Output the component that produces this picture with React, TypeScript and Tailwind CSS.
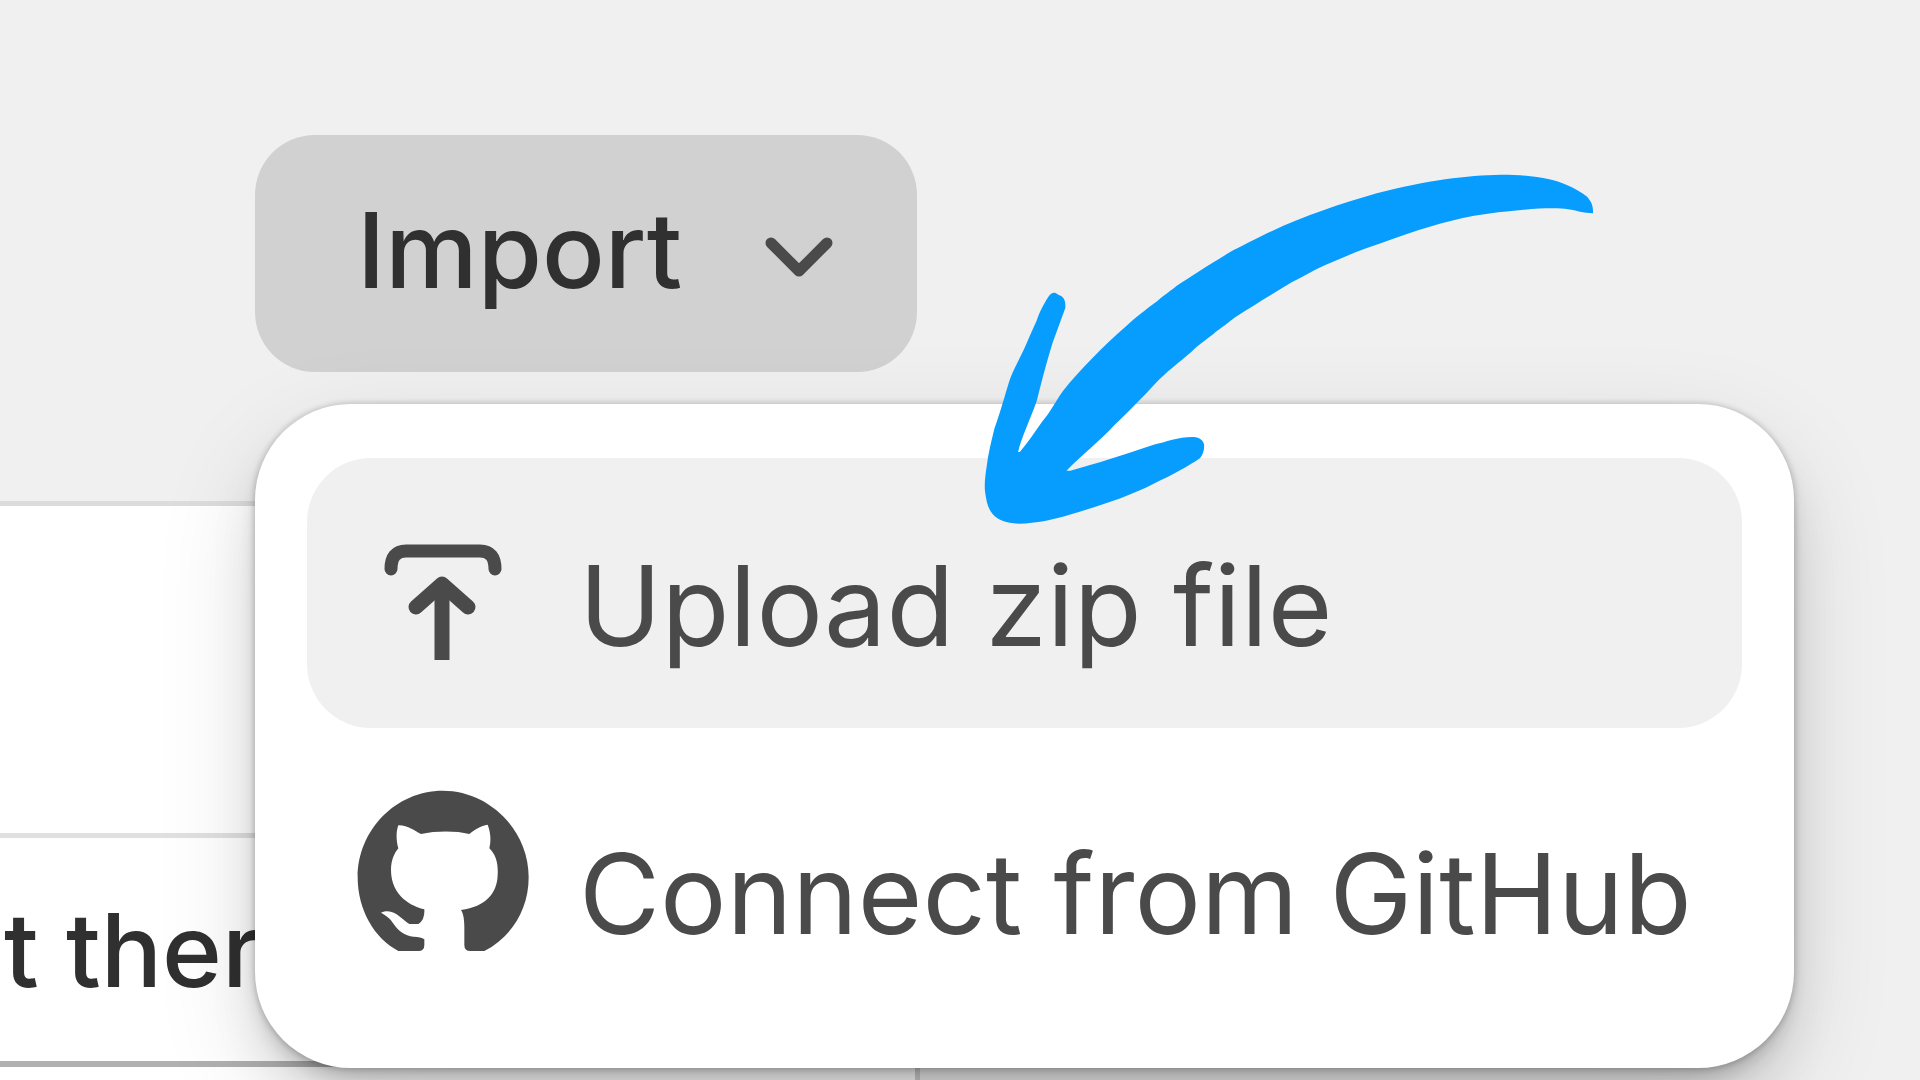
import React from "react";

const font = "font-['Inter',sans-serif]";

function ChevronDown() {
  return (
    <svg aria-hidden="true" viewBox="0 0 72 46" className="mt-2 h-[46px] w-[72px] shrink-0" fill="none" stroke="#4a4a4a" strokeWidth="11" strokeLinecap="round" strokeLinejoin="round">
      <path d="M8 8 L36 36 L64 8" />
    </svg>
  );
}

function UploadIcon() {
  return (
    <svg aria-hidden="true" viewBox="0 0 178 178" className="size-[178px] shrink-0" fill="none" stroke="#4a4a4a" strokeWidth="12" strokeLinecap="round" strokeLinejoin="round">
      <path d="M38 65 Q38 47 53 47 H127 Q142 47 142 65" strokeWidth="13" />
      <path d="M89 156 V82" strokeWidth="15" strokeLinecap="butt" />
      <path d="M63 103 L89 80 L115 103" strokeWidth="15" />
    </svg>
  );
}

function GitHubIcon() {
  return (
    <svg aria-hidden="true" viewBox="36 33 534 534" className="mb-[22px] size-[178px] shrink-0" fill="#4a4a4a">
      <path d="M305 62 C165 62 50 180 50 322 C50 420 100 505 172 543 H232 Q250 543 250 525 V508 Q240 500 218 500 C190 498 172 482 158 462 C148 446 138 438 120 428 C160 412 180 448 205 462 H232 Q252 450 250 418 C215 410 150 380 150 300 C150 270 160 250 172 235 C165 210 165 185 172 166 C200 165 220 182 240 192 C285 182 345 182 385 192 C400 180 420 166 440 164 C450 190 450 215 445 235 C465 255 472 280 470 315 C468 370 435 410 360 420 C367 430 370 450 370 470 V525 Q370 543 388 543 H430 C510 502 563 420 563 322 C563 180 445 62 305 62 Z" />
    </svg>
  );
}

function Arrow() {
  return (
    <svg aria-hidden="true" viewBox="0 0 1568 1200" preserveAspectRatio="none" className="pointer-events-none absolute left-[960px] top-[150px] z-20 h-[400px] w-[660px]" fill="#069dff">
      <path d="M1504 188 C1504 170 1502 158 1490 140 C1460 112 1425 94 1400 88 C1365 78 1330 74 1285 74 C1205 76 1110 90 990 130 C900 163 810 200 720 256 C690 274 675 286 650 300 C590 345 555 375 515 407 C490 432 480 440 465 457 C440 480 420 500 395 528 C335 595 285 660 245 722 C225 758 215 785 195 815 C178 845 160 880 142 906 L138 906 C145 865 165 815 183 750 C188 725 192 705 198 675 C206 640 212 610 220 578 L250 475 C252 452 246 440 236 436 L227 429 C220 427 215 432 210 440 C195 470 188 490 182 512 C170 545 160 575 152 598 C138 635 125 665 118 690 C108 730 95 790 82 835 C74 875 68 910 65 935 C60 975 57 1005 60 1030 C63 1055 66 1075 78 1093 C92 1112 110 1120 140 1121 C180 1120 225 1108 260 1094 C330 1068 400 1040 460 1001 C505 975 540 950 570 925 C580 908 580 895 580 884 C578 872 570 862 555 861 C520 860 490 876 460 884 C400 910 320 942 262 962 L253 962 C285 920 335 870 367 825 C405 780 435 740 463 702 C490 665 520 638 550 605 C570 580 590 565 608 545 C632 523 640 515 652 503 C700 465 745 430 788 397 C815 380 840 360 868 345 C900 328 930 311 965 295 C1010 275 1050 256 1090 240 C1160 212 1225 192 1310 183 C1365 175 1420 172 1445 178 C1465 181 1480 190 1504 190 Z" />
    </svg>
  );
}

const items = [
  { label: "Upload zip file", icon: <UploadIcon />, active: true },
  { label: "Connect from GitHub", icon: <GitHubIcon />, active: false },
];

function ImportMenu() {
  return (
    <div className="relative ml-[255px] inline-block align-top">
      <button type="button" aria-haspopup="menu" aria-expanded="true" className="flex h-[237px] w-[662px] items-center justify-between rounded-[60px] bg-[#d1d1d1] pl-[102px] pr-[82px] text-[104px] font-[550] leading-none text-[#303030]">
        <span className="pb-2">Import</span>
        <ChevronDown />
      </button>
      <ul role="menu" className="absolute left-0 top-[269px] z-10 flex w-max flex-col gap-[18px] rounded-[96px] bg-white px-[52px] pb-[52px] pt-[54px] shadow-[0_0_5px_2px_rgba(0,0,0,0.14),0_36px_110px_-10px_rgba(0,0,0,0.16),0_36px_60px_-14px_rgba(0,0,0,0.14),0_12px_20px_-6px_rgba(0,0,0,0.2)]">
        {items.map((item) => (
          <li key={item.label} role="none">
            <button
              type="button"
              role="menuitem"
              className={
                item.active
                  ? "flex h-[270px] w-full items-center gap-12 rounded-[64px] bg-[#f0f0f0] pl-[46px] pr-[50px] text-left"
                  : "flex h-[270px] w-full items-center gap-12 rounded-[64px] pl-[46px] pr-[50px] text-left"
              }
            >
              {item.icon}
              <span className="pt-6 text-[111px] leading-none text-[#4a4a4a]">{item.label}</span>
            </button>
          </li>
        ))}
      </ul>
    </div>
  );
}

export default function App() {
  return (
    <main className={`${font} relative h-screen overflow-hidden bg-[#f0f0f0] pt-[135px]`}>
      <ImportMenu />
      <section className="mt-[129px] w-[920px] border-t-[5px] border-[#dcdcdc] bg-white">
        <div className="h-[332px] border-b-[5px] border-[#e0e0e0]" />
        <div className="flex h-[229px] items-center border-b-[6px] border-[#b0b0b0] pl-1">
          <p className="whitespace-nowrap text-[102px] font-[550] leading-none text-[#303030]">t ther</p>
        </div>
        <div className="h-20 border-r-[5px] border-[#d0d0d0] bg-white" />
      </section>
      <Arrow />
    </main>
  );
}
